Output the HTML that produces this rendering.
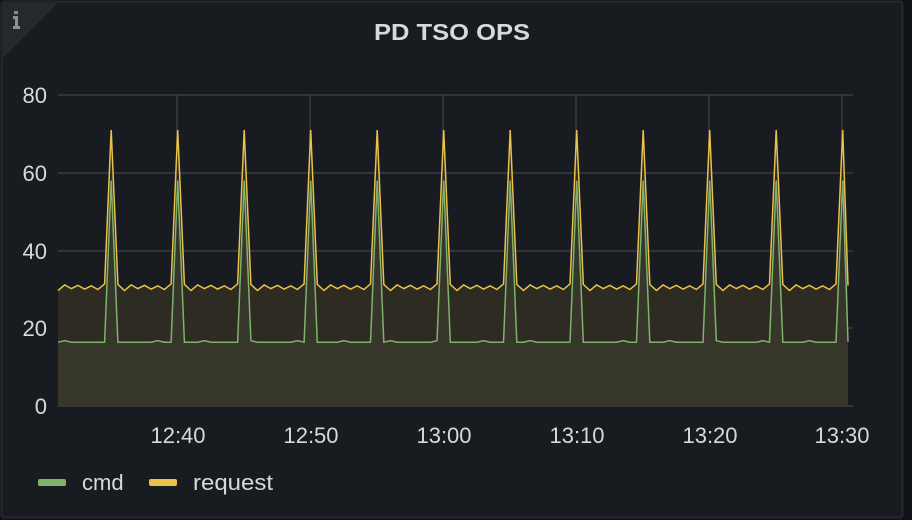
<!DOCTYPE html>
<html><head><meta charset="utf-8"><style>
html,body{margin:0;padding:0;background:#111217;}
svg{display:block;font-family:"Liberation Sans",sans-serif;}
</style></head><body>
<svg id="s" width="912" height="520" viewBox="0 0 912 520" xmlns="http://www.w3.org/2000/svg">
<rect x="0" y="0" width="912" height="520" fill="#111217"/>
<rect x="1.5" y="1.5" width="901" height="516" rx="3" fill="#181b1f" stroke="#25282d" stroke-width="2"/>
<path d="M3 3 L58 3 L3 58 Z" fill="#25282d"/>
<rect x="14" y="11" width="4" height="3" fill="#8e8e98"/>
<path d="M13 16 H18 V26 H20 V29 H13 V26 H15 V19 H13 Z" fill="#8e8e98"/>
<text x="452" y="40" font-size="23" font-weight="bold" fill="#d8d9e0" text-anchor="middle" textLength="156" lengthAdjust="spacingAndGlyphs">PD TSO OPS</text>
<g fill="#d8d9e0" font-size="22" text-anchor="end">
<text x="47" y="103">80</text><text x="47" y="181">60</text><text x="47" y="259">40</text><text x="47" y="336">20</text><text x="47" y="414">0</text>
</g>
<g fill="#d8d9e0" font-size="22" text-anchor="middle">
<text x="178" y="443">12:40</text><text x="311" y="443">12:50</text><text x="444" y="443">13:00</text><text x="577" y="443">13:10</text><text x="710" y="443">13:20</text><text x="842" y="443">13:30</text>
</g>
<g id="plot"></g>
<rect x="38" y="479" width="28" height="7" rx="2" fill="#7eb26d"/>
<text x="82" y="490" font-size="22" fill="#d8d9e0">cmd</text>
<rect x="149" y="479" width="28" height="7" rx="2" fill="#eac14a"/>
<text x="193" y="490" font-size="22" fill="#d8d9e0" textLength="80" lengthAdjust="spacingAndGlyphs">request</text>
</svg>
<script>
var y=function(v){return 406-v*3.8875;};
var g='';
[95,173,251,328].forEach(function(t){g+='<line x1="58" x2="853" y1="'+t+'" y2="'+t+'" stroke="#3a3c42" stroke-width="1.5"/>';});
[177,310,443,576,709,842].forEach(function(t){g+='<line x1="'+t+'" x2="'+t+'" y1="95" y2="406" stroke="#3a3c42" stroke-width="1.5"/>';});
var req=[],cmd=[];var step=6.65;
var spikes=[];for(var k=0;k<12;k++)spikes.push(111+66.5*k);
var x=58,i=0;
while(x<=844){
 var sp=false;spikes.forEach(function(s){if(Math.abs(s-x)<3.3)sp=true;});
 var j=(i%2?0.9:-0.6)+((i*7)%5)*0.15;
 if(sp){req.push([x,71]);cmd.push([x,58]);}
 else{req.push([x,30.2+j*0.8]);cmd.push([x,16.4+(i%7==1?0.4:0)]);}
 x+=step;i++;
}
req.push([848,31]);cmd.push([848,16.5]);
function path(a){return a.map(function(p,k){return (k?'L':'M')+p[0].toFixed(1)+' '+y(p[1]).toFixed(1);}).join(' ');}
var last=848;
g+='<path d="'+path(req)+' L'+last+' 406 L58 406 Z" fill="#2e2b22"/>';
g+='<path d="'+path(cmd)+' L'+last+' 406 L58 406 Z" fill="#36362a"/>';
g+='<line x1="58" x2="853" y1="406" y2="406" stroke="#3a3c42" stroke-width="1.5"/>';
g+='<path d="'+path(cmd)+'" fill="none" stroke="#7eb26d" stroke-width="1.5"/>';
g+='<path d="'+path(req)+'" fill="none" stroke="#eac14a" stroke-width="1.5"/>';
document.getElementById('plot').innerHTML=g;
</script>
</body></html>
